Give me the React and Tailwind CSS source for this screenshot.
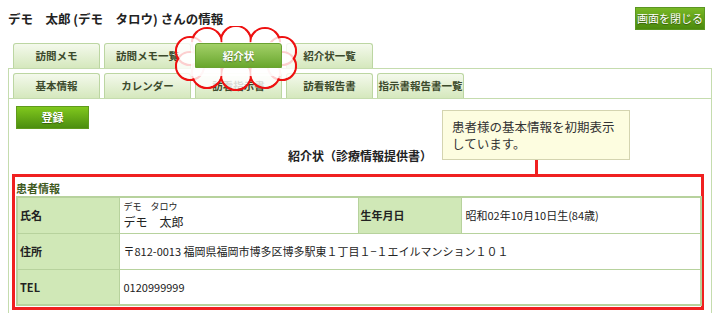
import React from 'react';

const topTabs = ['訪問メモ', '訪問メモ一覧', '紹介状', '紹介状一覧'];
const subTabs = ['基本情報', 'カレンダー', '訪看指示書', '訪看報告書', '指示書報告書一覧'];

function Tab({ label, active }) {
  if (active) {
    return (
      <div className="relative z-20 w-[87px] h-[25px] flex items-center justify-center rounded-t-[3px] border border-[#6aa232] bg-linear-to-b from-[#a3d067] to-[#69a72c] text-white font-bold text-[10.5px] whitespace-nowrap [text-shadow:0_1px_1px_rgba(0,0,0,0.35)]">
        {label}
      </div>
    );
  }
  return (
    <div className="w-[87px] h-[25px] flex items-center justify-center rounded-t-[3px] border border-b-0 border-[#bcd6a2] bg-linear-to-b from-[#f4f9ec] to-[#d5e8bd] text-[#3c4a2c] font-bold text-[10.5px] whitespace-nowrap">
      {label}
    </div>
  );
}

function Cloud() {
  const circles = [
    [32, 17, 15], [61, 15, 15], [90, 17, 15],
    [32, 47, 15], [61, 49, 15], [90, 47, 15],
    [15, 25, 14], [15, 40, 14], [107, 25, 14], [107, 40, 14],
  ];
  return (
    <svg className="absolute left-[175px] top-[26px] z-10" width="122" height="66" viewBox="0 0 122 66">
      <g fill="none" stroke="#ee1111" strokeWidth="2.2">
        {circles.map(([x, y, r], i) => <circle key={i} cx={x} cy={y} r={r} />)}
      </g>
      <g fill="#ffffff" fillOpacity="0.8">
        {circles.map(([x, y, r], i) => <circle key={i} cx={x} cy={y} r={r - 1.1} />)}
        <rect x="16" y="16" width="90" height="34" />
      </g>
    </svg>
  );
}

export default function App() {
  return (
    <div className="relative w-[720px] h-[313px] overflow-hidden bg-white text-[#222] font-['Noto_Sans_CJK_JP','Noto_Sans',sans-serif]">
      {/* Header */}
      <div className="flex items-center justify-between pl-[8px] pr-[15px] pt-[7px]">
        <h1 className="text-[12.5px] font-bold leading-[23px] text-[#222]">デモ　太郎 (デモ　タロウ) さんの情報</h1>
        <button className="w-[70px] h-[23px] flex items-center justify-center border border-[#5b9622] bg-linear-to-b from-[#78b825] to-[#4b8a0c] text-white text-[11px] whitespace-nowrap [text-shadow:0_1px_1px_rgba(0,0,0,0.4)]">
          画面を閉じる
        </button>
      </div>

      {/* Top tabs */}
      <div className="mt-[13px] ml-[13px] flex gap-[4px] h-[25px] items-end">
        {topTabs.map((t, i) => <Tab key={t} label={t} active={i === 2} />)}
      </div>

      <Cloud />

      {/* Panel */}
      <div className="mx-[8px] h-[260px] border border-b-0 border-[#c5dcae]">
        <div className="flex gap-[4px] px-[4px] pt-[4px] border-b border-[#c5dcae]">
          {subTabs.map((t) => <Tab key={t} label={t} />)}
        </div>

        <div className="px-[7px]">
          <button className="mt-[7px] w-[73px] h-[23px] flex items-center justify-center border border-[#5f9a1c] bg-linear-to-b from-[#80c81d] to-[#4c8e0f] text-white font-bold text-[11px] [text-shadow:0_1px_1px_rgba(0,0,0,0.4)]">
            登録
          </button>

          <div className="mt-[19px] flex justify-center">
            <h2 className="text-[12px] font-bold leading-[16px] text-[#222]">紹介状（診療情報提供書）</h2>
          </div>

          {/* Highlighted patient section */}
          <div className="mt-[10px] ml-[-4px] w-[692px] border-[3px] border-[#f02020] px-[1px] pb-[1px] pt-[3px]">
            <div className="text-[11px] font-bold leading-[16px] text-[#3f5a1d]">患者情報</div>
            <table className="w-[684px] border-collapse border-2 border-[#b7d29d] text-[11px] table-fixed">
              <colgroup>
                <col className="w-[102px]" />
                <col className="w-[239px]" />
                <col className="w-[103px]" />
                <col className="w-[240px]" />
              </colgroup>
              <tbody>
                <tr className="h-[36px]">
                  <th className="border border-[#b7d29d] bg-[#d0e8b7] text-left font-bold px-[2px]">氏名</th>
                  <td className="border border-[#b7d29d] px-[4px] align-middle">
                    <div className="text-[9px] leading-[12px]">デモ　タロウ</div>
                    <div className="text-[12px] leading-[17px]">デモ　太郎</div>
                  </td>
                  <th className="border border-[#b7d29d] bg-[#d0e8b7] text-left font-bold px-[2px]">生年月日</th>
                  <td className="border border-[#b7d29d] px-[4px]">昭和02年10月10日生(84歳)</td>
                </tr>
                <tr className="h-[36px]">
                  <th className="border border-[#b7d29d] bg-[#d0e8b7] text-left font-bold px-[2px]">住所</th>
                  <td colSpan={3} className="border border-[#b7d29d] px-[4px]">〒812-0013 福岡県福岡市博多区博多駅東１丁目１−１エイルマンション１０１</td>
                </tr>
                <tr className="h-[36px]">
                  <th className="border border-[#b7d29d] bg-[#d0e8b7] text-left font-bold px-[2px]">TEL</th>
                  <td colSpan={3} className="border border-[#b7d29d] px-[4px]">0120999999</td>
                </tr>
              </tbody>
            </table>
          </div>
        </div>
      </div>

      {/* Callout */}
      <div className="absolute left-[442px] top-[110px] w-[188px] h-[50px] border border-[#d4d4b0] bg-[#fdfde0] pl-[9px] pt-[7px] text-[12.5px] leading-[17px] text-[#333] whitespace-nowrap">
        患者様の基本情報を初期表示<br />しています。
      </div>
      <div className="absolute left-[535px] top-[160px] w-[3px] h-[15px] bg-[#f02020]" />
    </div>
  );
}
